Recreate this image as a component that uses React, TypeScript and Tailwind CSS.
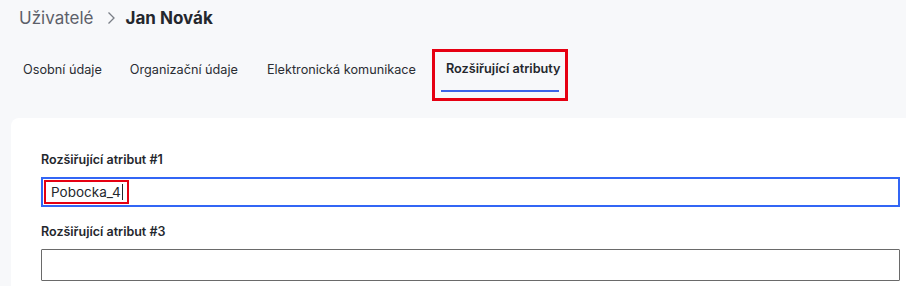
import React from "react";

export default function App() {
  const font = { fontFamily: "Inter, 'Noto Sans', sans-serif" };
  return (
    <div className="w-[906px] h-[286px] overflow-hidden bg-[#f7f8fa] flex flex-col" style={font}>
      <div className="flex items-center pl-[19px] pt-[4px] h-[32px] text-[17px] leading-[28px] whitespace-nowrap">
        <span className="text-[#5c6069]">Uživatelé</span>
        <svg className="ml-[13px] mr-[10px]" width="9" height="14" viewBox="0 0 9 14" fill="none">
          <path d="M1.5 1.5 L7 7 L1.5 12.5" stroke="#7a7e86" strokeWidth="1.3" />
        </svg>
        <span className="font-bold text-[#24272d]">Jan Novák</span>
      </div>
      <div className="flex items-start pl-[23px] mt-[17px] h-[52px] text-[12.7px] text-[#2a2d33] whitespace-nowrap">
        <div className="pt-[11px]">Osobní údaje</div>
        <div className="pt-[11px] ml-[28px]">Organizační údaje</div>
        <div className="pt-[11px] ml-[29px]">Elektronická komunikace</div>
        <div className="ml-[16px] w-[136px] h-[52px] border-[3px] border-[#e60012] px-[6px] pt-[8px]">
          <div className="pl-[5px] font-semibold text-[#24272d] leading-[18px]">Rozšiřující atributy</div>
          <div className="mt-[12px] h-[2px] bg-[#3b63e8]" />
        </div>
      </div>
      <div className="ml-[11px] mt-[17px] flex-1 bg-white rounded-tl-[8px] pl-[30px] pr-[6px] pt-[34px]">
        <div className="text-[12.5px] font-semibold text-[#24272d] leading-[16px]">Rozšiřující atribut #1</div>
        <div className="mt-[9px] h-[30px] border-2 border-[#3366f5] flex items-center pl-[1px]">
          <div className="h-[24px] border-[2px] border-[#e60012] flex items-center pl-[5px] pr-[4px] text-[13.5px] text-[#24272d]">
            Pobocka_4<span className="inline-block w-[1px] h-[16px] bg-[#24272d] ml-[1px]" />
          </div>
        </div>
        <div className="mt-[17px] text-[12.5px] font-semibold text-[#24272d] leading-[16px]">Rozšiřující atribut #3</div>
        <div className="mt-[9px] h-[32px] border border-[#6a6a6a] rounded-[1px]" />
      </div>
    </div>
  );
}
